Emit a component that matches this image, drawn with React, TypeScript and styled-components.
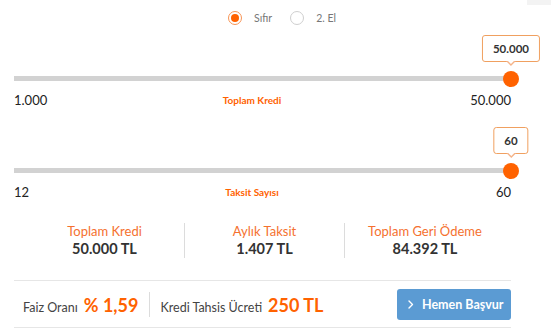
import styled, { createGlobalStyle } from "styled-components";

const GlobalStyle = createGlobalStyle`
  * { box-sizing: border-box; }
  body {
    margin: 0;
    background: #ffffff;
    font-family: Lato, "Open Sans", sans-serif;
    color: #333333;
  }
`;

const ORANGE = "#ff6200";

const Page = styled.div`
  width: 551px;
  height: 333px;
  overflow: hidden;
  background: #fff;
`;

const TopBar = styled.div`
  display: grid;
  grid-template-columns: 1fr auto 1fr;
  height: 36px;
`;

const Corner = styled.div`
  grid-column: 3;
  justify-self: end;
  align-self: start;
  width: 24px;
  height: 5px;
  background: #f3f3f3;
`;

const RadioGroup = styled.div`
  grid-column: 2;
  display: flex;
  align-items: center;
  gap: 18px;
  padding-left: 13px;
`;

const RadioItem = styled.label`
  display: flex;
  align-items: center;
  gap: 12px;
  font-size: 10.5px;
  color: #777;
  cursor: pointer;
`;

const RadioCircle = styled.span<{ $checked?: boolean }>`
  width: 14px;
  height: 14px;
  border-radius: 50%;
  border: 1.5px solid ${p => (p.$checked ? "#f79455" : "#cfcfcf")};
  display: flex;
  align-items: center;
  justify-content: center;
  &::after {
    content: "";
    width: 8px;
    height: 8px;
    border-radius: 50%;
    background: ${p => (p.$checked ? ORANGE : "transparent")};
  }
`;

const Body = styled.div`
  padding: 0 40px 0 14px;
`;

const SliderBlock = styled.div<{ $top: number }>`
  padding-top: ${p => p.$top}px;
`;

const Rail = styled.div`
  position: relative;
  height: 5px;
  background: #d2d2d2;
`;

const Thumb = styled.span`
  position: absolute;
  top: 50%;
  width: 16px;
  height: 16px;
  border-radius: 50%;
  background: ${ORANGE};
  transform: translate(-50%, -50%);
`;

const Tip = styled.span`
  position: absolute;
  bottom: calc(100% + 14px);
  transform: translateX(-50%);
  height: 27px;
  line-height: 25px;
  padding: 0 10px;
  border: 1px solid #f0a060;
  border-radius: 3px;
  background: #fff;
  font-size: 11.5px;
  font-weight: 700;
  color: #333;
  white-space: nowrap;
  &::before,
  &::after {
    content: "";
    position: absolute;
    left: 50%;
    transform: translateX(-50%);
    border-style: solid;
    border-color: transparent;
  }
  &::before {
    top: 100%;
    border-width: 5px 5px 0 5px;
    border-top-color: #f5b48a;
  }
  &::after {
    top: calc(100% - 1px);
    border-width: 4px 4px 0 4px;
    border-top-color: #fff;
  }
`;

const LabelRow = styled.div`
  display: grid;
  grid-template-columns: 1fr auto 1fr;
  align-items: center;
  margin-top: 11px;
  height: 16px;
`;

const EdgeLabel = styled.span<{ $end?: boolean }>`
  font-size: 13px;
  color: #222;
  justify-self: ${p => (p.$end ? "end" : "start")};
`;

const CenterLabel = styled.span`
  font-size: 10px;
  font-weight: 700;
  color: ${ORANGE};
  margin-right: 21px;
`;

const Summary = styled.div`
  display: grid;
  grid-template-columns: repeat(3, 160px);
  margin: 23px 0 0 11px;
`;

const SummaryCell = styled.div<{ $last?: boolean }>`
  display: flex;
  flex-direction: column;
  align-items: center;
  height: 35px;
  border-right: ${p => (p.$last ? "none" : "1px solid #dcdcdc")};
`;

const SummaryLabel = styled.span`
  font-size: 13px;
  line-height: 16px;
  color: #f5712f;
`;

const SummaryValue = styled.span`
  font-size: 14.5px;
  line-height: 20px;
  font-weight: 700;
  color: #333;
`;

const Footer = styled.div`
  margin-top: 22px;
  border-top: 1px solid #e6e6e6;
  border-bottom: 1px solid #e6e6e6;
  height: 48px;
  padding: 8px 0 7px 9px;
  display: flex;
  align-items: center;
`;

const Rate = styled.div`
  display: flex;
  align-items: baseline;
  gap: 6px;
`;

const RateLabel = styled.span`
  font-size: 12.5px;
  color: #444;
`;

const RateValue = styled.span`
  font-size: 18px;
  font-weight: 700;
  color: ${ORANGE};
`;

const Divider = styled.span`
  width: 1px;
  height: 25px;
  background: #dcdcdc;
  margin: 0 10px 0 11px;
`;

const ApplyButton = styled.button`
  margin-left: auto;
  width: 114px;
  height: 31px;
  border: none;
  border-radius: 3px;
  background: #5b9bd3;
  color: #fff;
  font-family: inherit;
  font-size: 12.5px;
  font-weight: 700;
  display: flex;
  align-items: center;
  gap: 8px;
  padding: 0 0 0 11px;
  cursor: pointer;
`;

type SliderProps = {
  min: number;
  max: number;
  value: number;
  label: string;
  top: number;
  format: (n: number) => string;
};

const Slider = ({ min, max, value, label, top, format }: SliderProps) => {
  const pct = ((value - min) / (max - min)) * 100;
  return (
    <SliderBlock $top={top}>
      <Rail>
        <Tip style={{ left: `${pct}%` }}>{format(value)}</Tip>
        <Thumb style={{ left: `${pct}%` }} />
      </Rail>
      <LabelRow>
        <EdgeLabel>{format(min)}</EdgeLabel>
        <CenterLabel>{label}</CenterLabel>
        <EdgeLabel $end>{format(max)}</EdgeLabel>
      </LabelRow>
    </SliderBlock>
  );
};

const money = (n: number) => n.toLocaleString("de-DE");
const plain = (n: number) => String(n);

const summary = [
  { label: "Toplam Kredi", value: "50.000 TL" },
  { label: "Aylık Taksit", value: "1.407 TL" },
  { label: "Toplam Geri Ödeme", value: "84.392 TL" },
];

const App = () => {
  return (
    <Page>
      <GlobalStyle />
      <TopBar>
        <RadioGroup>
          <RadioItem>
            <RadioCircle $checked />
            Sıfır
          </RadioItem>
          <RadioItem>
            <RadioCircle />
            2. El
          </RadioItem>
        </RadioGroup>
        <Corner />
      </TopBar>
      <Body>
        <Slider min={1000} max={50000} value={50000} label="Toplam Kredi" top={40} format={money} />
        <Slider min={12} max={60} value={60} label="Taksit Sayısı" top={60} format={plain} />
        <Summary>
          {summary.map((s, i) => (
            <SummaryCell key={s.label} $last={i === summary.length - 1}>
              <SummaryLabel>{s.label}</SummaryLabel>
              <SummaryValue>{s.value}</SummaryValue>
            </SummaryCell>
          ))}
        </Summary>
        <Footer>
          <Rate>
            <RateLabel>Faiz Oranı</RateLabel>
            <RateValue>% 1,59</RateValue>
          </Rate>
          <Divider />
          <Rate>
            <RateLabel>Kredi Tahsis Ücreti</RateLabel>
            <RateValue>250 TL</RateValue>
          </Rate>
          <ApplyButton>
            <svg width="6" height="9" viewBox="0 0 6 9" fill="none">
              <path d="M1 1l3.5 3.5L1 8" stroke="#fff" strokeWidth="1.4" strokeLinecap="round" strokeLinejoin="round" />
            </svg>
            Hemen Başvur
          </ApplyButton>
        </Footer>
      </Body>
    </Page>
  );
};

export default App;
